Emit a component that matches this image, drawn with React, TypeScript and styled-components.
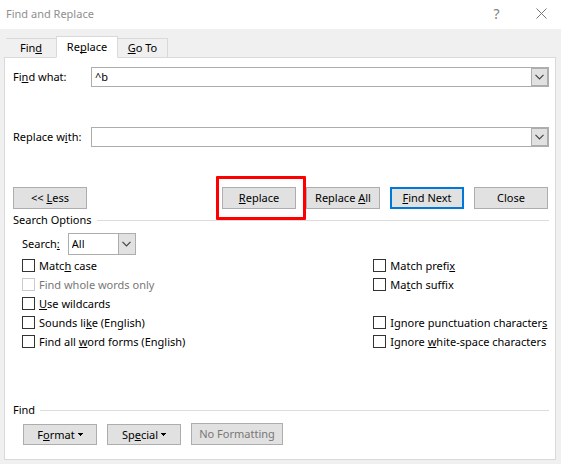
import React, { useState } from "react";
import styled, { createGlobalStyle, css } from "styled-components";

const color = {
  chrome: "#f0f0f0",
  face: "#e1e1e1",
  border: "#adadad",
  rule: "#dcdcdc",
  text: "#000000",
  muted: "#777777",
  accent: "#0078d7",
  highlight: "#ff0000",
};

const GlobalStyle = createGlobalStyle`
  *, *::before, *::after { box-sizing: border-box; }
  body { margin: 0; background: ${color.chrome}; }
  body, button, input, select {
    font-family: "Noto Sans", "Open Sans", sans-serif;
    font-size: 11px;
    line-height: 16px;
    color: ${color.text};
  }
  button, input, select { border-radius: 0; margin: 0; padding: 0; }
`;

const Dialog = styled.div`
  display: flex;
  flex-direction: column;
  min-height: 100vh;
`;

const TitleBar = styled.header`
  display: flex;
  align-items: center;
  height: 29px;
  padding: 0 14px 2px 6px;
  background: #ffffff;
`;

const Title = styled.h1`
  flex: 1;
  margin: 0;
  font-size: 11px;
  font-weight: 400;
  line-height: 16px;
  color: #8f8f8f;
`;

const CaptionButton = styled.button`
  display: grid;
  place-items: center;
  width: 11px;
  height: 16px;
  margin-left: 34px;
  border: 0;
  background: transparent;
  font-size: 14px;
  color: #808080;
`;

const Tabs = styled.div`
  display: flex;
  align-items: flex-end;
  height: 29px;
  padding: 0 6px;
  margin-bottom: -1px;
`;

const Tab = styled.button<{ $active?: boolean; $width: number }>`
  width: ${(p) => p.$width}px;
  height: 20px;
  border: 1px solid #d9d9d9;
  border-left-width: 0;
  background: ${color.chrome};
  text-align: center;
  &:first-child { border-right-width: 0; }
  ${(p) =>
    p.$active &&
    css`
      z-index: 1;
      height: 22px;
      border-left-width: 1px;
      border-bottom-color: #ffffff;
      background: #ffffff;
    `}
`;

const Panel = styled.main`
  flex: 1;
  display: flex;
  flex-direction: column;
  margin: 0 5px 4px 4px;
  padding: 9px 6px 14px 8px;
  border: 1px solid #d9d9d9;
  background: #ffffff;
`;

const Field = styled.div`
  display: grid;
  grid-template-columns: 78px 1fr;
  align-items: center;
  margin-bottom: 40px;
`;

const Combo = styled.div`
  display: flex;
  height: 20px;
  border: 1px solid ${color.border};
`;

const ComboInput = styled.input`
  flex: 1;
  min-width: 0;
  padding: 0 3px;
  border: 0;
  outline: 0;
  background: #ffffff;
`;

const DropFace = styled.span`
  display: grid;
  place-items: center;
  width: 17px;
  border: 1px solid ${color.border};
  background: ${color.face};
`;

const Buttons = styled.div`
  display: flex;
  gap: 10px;
  padding-right: 1px;
`;

const Spacer = styled.span`
  flex: 1;
`;

const PushButton = styled.button<{ $width?: number; $short?: boolean; $primary?: boolean }>`
  display: flex;
  align-items: center;
  justify-content: center;
  gap: 3px;
  width: ${(p) => p.$width ?? 74}px;
  height: ${(p) => (p.$short ? 21 : 22)}px;
  border: ${(p) => (p.$primary ? `2px solid ${color.accent}` : `1px solid ${color.border}`)};
  background: ${color.face};
  white-space: nowrap;
  &:disabled { color: ${color.muted}; }
`;

const Highlight = styled.div`
  position: relative;
  &::after {
    content: "";
    position: absolute;
    inset: -11px -10px -11px -6px;
    border: 3px solid ${color.highlight};
    border-radius: 1px;
    pointer-events: none;
  }
`;

const Group = styled.h2`
  display: flex;
  align-items: center;
  gap: 5px;
  margin: 3px 0 0;
  font-size: 11px;
  font-weight: 400;
  line-height: 16px;
  &::after {
    content: "";
    flex: 1;
    height: 1px;
    background: ${color.rule};
  }
`;

const SearchRow = styled.div`
  display: flex;
  align-items: center;
  gap: 8px;
  padding: 5px 0 0 9px;
`;

const SelectBox = styled.div`
  position: relative;
  width: 68px;
  height: 22px;
`;

const Select = styled.select`
  appearance: none;
  width: 100%;
  height: 100%;
  padding: 0 20px 0 3px;
  border: 1px solid ${color.border};
  background: #ffffff;
`;

const SelectFace = styled(DropFace)`
  position: absolute;
  inset: 0 0 0 auto;
  width: 18px;
  pointer-events: none;
`;

const Options = styled.div`
  display: grid;
  grid-template-columns: 2fr 1fr;
  grid-auto-rows: 19px;
  align-items: center;
  padding: 1px 0 0 9px;
`;

const OptionLabel = styled.label<{ $column: number; $row: number; $disabled?: boolean }>`
  grid-column: ${(p) => p.$column};
  grid-row: ${(p) => p.$row};
  display: flex;
  align-items: center;
  gap: 4px;
  white-space: nowrap;
  color: ${(p) => (p.$disabled ? color.muted : color.text)};
`;

const Check = styled.input`
  appearance: none;
  display: grid;
  place-items: center;
  width: 13px;
  height: 13px;
  border: 1px solid #333333;
  background: #ffffff;
  &:disabled { border-color: #cccccc; }
  &:checked::after {
    content: "";
    width: 7px;
    height: 4px;
    border: solid #333333;
    border-width: 0 0 1px 1px;
    transform: rotate(-45deg);
  }
`;

const Footer = styled.section`
  margin-top: auto;
`;

const FooterButtons = styled.div`
  display: flex;
  align-items: flex-end;
  gap: 10px;
  padding: 5px 0 0 10px;
`;

const Mnemonic = styled.u`
  text-decoration-thickness: 1px;
  text-decoration-skip-ink: none;
  text-underline-offset: 1px;
`;

/** Renders a caption in which "&" marks the access key that follows it. */
function Caption({ text }: { text: string }) {
  const at = text.indexOf("&");
  if (at < 0) return <span>{text}</span>;
  return (
    <span>
      {text.slice(0, at)}
      <Mnemonic>{text[at + 1]}</Mnemonic>
      {text.slice(at + 2)}
    </span>
  );
}

const Chevron = () => (
  <svg width="9" height="6" viewBox="0 0 9 6" fill="none" stroke="#444444" strokeWidth="1.2" aria-hidden="true">
    <path d="M0.5 0.8L4.5 4.8L8.5 0.8" />
  </svg>
);

const Arrow = () => (
  <svg width="5" height="3" viewBox="0 0 5 3" fill="#000000" shapeRendering="crispEdges" aria-hidden="true">
    <path d="M0 0H5V1H4V2H3V3H2V2H1V1H0Z" />
  </svg>
);

const Cross = () => (
  <svg width="11" height="11" viewBox="0 0 11 11" stroke="#777777" strokeWidth="1" aria-hidden="true">
    <path d="M0.5 0.5L10.5 10.5M10.5 0.5L0.5 10.5" />
  </svg>
);

const DropButton = styled(DropFace).attrs({ as: "button" })``;

function ComboField({ id, label, initial }: { id: string; label: string; initial: string }) {
  const [value, setValue] = useState(initial);
  return (
    <Field>
      <label htmlFor={id}>
        <Caption text={label} />
      </label>
      <Combo>
        <ComboInput id={id} value={value} onChange={(e) => setValue(e.target.value)} />
        <DropButton aria-label="Recent entries">
          <Chevron />
        </DropButton>
      </Combo>
    </Field>
  );
}

const options = [
  { text: "Matc&h case", column: 1, row: 1 },
  { text: "Find whole words only", column: 1, row: 2, disabled: true },
  { text: "&Use wildcards", column: 1, row: 3 },
  { text: "Sounds li&ke (English)", column: 1, row: 4 },
  { text: "Find all &word forms (English)", column: 1, row: 5 },
  { text: "Match prefi&x", column: 2, row: 1 },
  { text: "Ma&tch suffix", column: 2, row: 2 },
  { text: "Ignore punctuation character&s", column: 2, row: 4 },
  { text: "Ignore &white-space characters", column: 2, row: 5 },
];

export default function App() {
  return (
    <>
      <GlobalStyle />
      <Dialog role="dialog" aria-labelledby="title">
        <TitleBar>
          <Title id="title">Find and Replace</Title>
          <CaptionButton>?</CaptionButton>
          <CaptionButton aria-label="Close dialog">
            <Cross />
          </CaptionButton>
        </TitleBar>
        <Tabs role="tablist">
          <Tab role="tab" $width={50}>
            <Caption text="Fin&d" />
          </Tab>
          <Tab role="tab" aria-selected $active $width={62}>
            <Caption text="Re&place" />
          </Tab>
          <Tab role="tab" $width={50}>
            <Caption text="&Go To" />
          </Tab>
        </Tabs>
        <Panel>
          <ComboField id="find" label="Fi&nd what:" initial="^b" />
          <ComboField id="replace" label="Replace w&ith:" initial="" />
          <Buttons>
            <PushButton>
              <Caption text="<< &Less" />
            </PushButton>
            <Spacer />
            <Highlight>
              <PushButton>
                <Caption text="&Replace" />
              </PushButton>
            </Highlight>
            <PushButton>
              <Caption text="Replace &All" />
            </PushButton>
            <PushButton $primary>
              <Caption text="&Find Next" />
            </PushButton>
            <PushButton>Close</PushButton>
          </Buttons>
          <Group>Search Options</Group>
          <SearchRow>
            <label htmlFor="direction">
              <Caption text="Search&:" />
            </label>
            <SelectBox>
              <Select id="direction" defaultValue="All">
                <option>All</option>
                <option>Down</option>
                <option>Up</option>
              </Select>
              <SelectFace>
                <Chevron />
              </SelectFace>
            </SelectBox>
          </SearchRow>
          <Options>
            {options.map((o) => (
              <OptionLabel key={o.text} $column={o.column} $row={o.row} $disabled={o.disabled}>
                <Check type="checkbox" disabled={o.disabled} />
                <Caption text={o.text} />
              </OptionLabel>
            ))}
          </Options>
          <Footer>
            <Group>Find</Group>
            <FooterButtons>
              <PushButton $short>
                <Caption text="F&ormat" />
                <Arrow />
              </PushButton>
              <PushButton $short>
                <Caption text="Sp&ecial" />
                <Arrow />
              </PushButton>
              <PushButton $width={92} disabled>
                No Formatting
              </PushButton>
            </FooterButtons>
          </Footer>
        </Panel>
      </Dialog>
    </>
  );
}
